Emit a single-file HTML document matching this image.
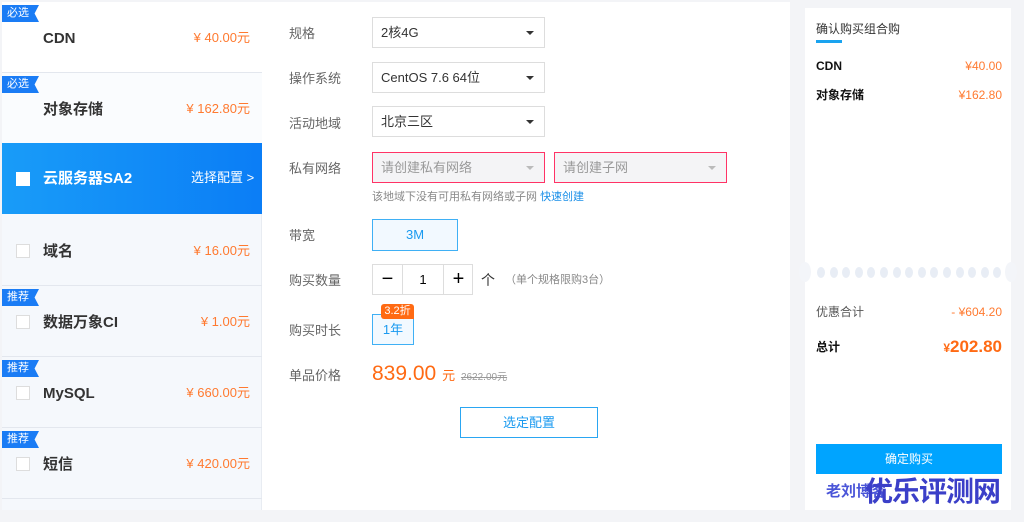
<!DOCTYPE html>
<html><head><meta charset="utf-8"><style>
*{margin:0;padding:0;box-sizing:border-box}
body{width:1024px;height:522px;background:#f3f4f7;font-family:"Liberation Sans","Noto Sans CJK SC",sans-serif;position:relative;overflow:hidden;line-height:1.15}
.a{position:absolute}
.left{left:2px;top:2px;width:260px;height:508px;background:#f5f8fc;border-right:1px solid #e8ecf2}
.item{position:absolute;left:0;width:260px;height:71px;border-bottom:1px solid #e3e7ee}
.tag{position:absolute;left:0;top:3px;width:37px;height:17px;background:#1a7cf5;color:#fff;font-size:11px;line-height:17px;padding-left:5px;clip-path:polygon(0 0,100% 0,88% 50%,100% 100%,0 100%)}
.name{position:absolute;left:41px;top:28px;font-size:15px;font-weight:bold;color:#333}
.price{position:absolute;right:12px;top:29px;font-size:13px;color:#ff7a30}
.cb{position:absolute;left:14px;top:29px;width:14px;height:14px;background:#fff;border:1px solid #ddd}
.mid{left:262px;top:2px;width:528px;height:508px;background:#fff}
.lbl{position:absolute;left:289px;font-size:13px;color:#666}
.sel{position:absolute;left:372px;width:173px;height:31px;border:1px solid #ddd;font-size:13px;color:#333;line-height:29px;padding-left:8px}
.sel:after{content:"";position:absolute;right:10px;top:13px;border:4px solid transparent;border-top:4px solid #333}
.err{background:#f4f4f6;border-color:#f36;color:#999}
.err:after{border-top-color:#bbb}
.right{left:805px;top:8px;width:206px;height:502px;background:#fff}
.dot{position:absolute;top:267px;width:8px;height:11px;border-radius:50%;background:#e8edf5}
</style></head><body>
<div class="a left">
 <div class="item" style="top:0;background:#fff"><div class="tag">必选</div><div class="name">CDN</div><div class="price">¥ 40.00元</div></div>
 <div class="item" style="top:71px;background:#fafcfe"><div class="tag">必选</div><div class="name">对象存储</div><div class="price">¥ 162.80元</div></div>
 <div class="item" style="top:213px"><div class="cb"></div><div class="name">域名</div><div class="price">¥ 16.00元</div></div>
 <div class="item" style="top:284px"><div class="tag">推荐</div><div class="cb"></div><div class="name">数据万象CI</div><div class="price">¥ 1.00元</div></div>
 <div class="item" style="top:355px"><div class="tag">推荐</div><div class="cb"></div><div class="name">MySQL</div><div class="price">¥ 660.00元</div></div>
 <div class="item" style="top:426px"><div class="tag">推荐</div><div class="cb"></div><div class="name">短信</div><div class="price">¥ 420.00元</div></div>
</div>
<div class="a" style="left:2px;top:143px;width:272px;height:71px;background:linear-gradient(90deg,#199cf8,#0a7cf6);clip-path:polygon(0 0,262px 0,100% 50%,262px 100%,0 100%)">
 <div class="a" style="left:14px;top:29px;width:14px;height:14px;background:#fff"></div>
 <div class="a" style="left:41px;top:27px;font-size:15px;font-weight:bold;color:#fff">云服务器SA2</div>
 <div class="a" style="left:189px;top:28px;font-size:13px;color:#fff">选择配置 &gt;</div>
</div>
<div class="a mid"></div>
<div class="lbl" style="top:27px">规格</div><div class="sel" style="top:17px">2核4G</div>
<div class="lbl" style="top:72px">操作系统</div><div class="sel" style="top:62px">CentOS 7.6 64位</div>
<div class="lbl" style="top:117px">活动地域</div><div class="sel" style="top:106px">北京三区</div>
<div class="lbl" style="top:162px">私有网络</div>
<div class="sel err" style="top:152px">请创建私有网络</div>
<div class="sel err" style="top:152px;left:554px">请创建子网</div>
<div class="a" style="left:372px;top:191px;font-size:11px;color:#888">该地域下没有可用私有网络或子网 <span style="color:#1a8fe8">快速创建</span></div>
<div class="lbl" style="top:229px">带宽</div>
<div class="a" style="left:372px;top:219px;width:86px;height:32px;border:1px solid #3fb0f5;background:#f2f9ff;color:#1a9af0;font-size:13px;text-align:center;line-height:30px">3M</div>
<div class="lbl" style="top:274px">购买数量</div>
<div class="a" style="left:372px;top:264px;width:101px;height:31px;border:1px solid #ddd;font-size:13px;line-height:29px">
 <span class="a" style="left:0;width:30px;height:29px;border-right:1px solid #ddd;text-align:center;font-size:20px">−</span>
 <span class="a" style="left:30px;width:40px;text-align:center">1</span>
 <span class="a" style="left:70px;width:30px;height:29px;border-left:1px solid #ddd;text-align:center;font-size:20px">+</span>
</div>
<div class="a" style="left:481px;top:272px;font-size:14px;color:#333">个</div>
<div class="a" style="left:505px;top:274px;font-size:11px;color:#888">（单个规格限购3台）</div>
<div class="lbl" style="top:324px">购买时长</div>
<div class="a" style="left:372px;top:314px;width:42px;height:31px;border:1px solid #3fb0f5;background:#f2f9ff;color:#1a9af0;font-size:13px;text-align:center;line-height:30px">1年</div>
<div class="a" style="left:381px;top:304px;width:33px;height:15px;background:#ff6a13;color:#fff;font-size:11px;text-align:center;line-height:15px;border-radius:3px 3px 0 3px">3.2折</div>
<div class="lbl" style="top:369px">单品价格</div>
<div class="a" style="left:372px;top:362px;font-size:21px;color:#ff6a13">839.00 <span style="font-size:13px">元</span> <span style="font-size:10px;color:#999;text-decoration:line-through">2622.00元</span></div>
<div class="a" style="left:460px;top:407px;width:138px;height:31px;border:1px solid #2aa6f2;color:#1a9af0;font-size:13px;text-align:center;line-height:29px">选定配置</div>
<div class="a right"></div>
<div class="a" style="left:816px;top:23px;font-size:12px;color:#333">确认购买组合购</div>
<div class="a" style="left:816px;top:40px;width:26px;height:3px;background:#1aa3ef"></div>
<div class="a" style="left:816px;top:60px;font-size:12px;font-weight:bold;color:#111">CDN</div>
<div class="a" style="right:22px;top:60px;font-size:12px;color:#ff7a30">¥40.00</div>
<div class="a" style="left:816px;top:89px;font-size:12px;font-weight:bold;color:#111">对象存储</div>
<div class="a" style="right:22px;top:89px;font-size:12px;color:#ff7a30">¥162.80</div>
<div class="dot" style="left:817px"></div><div class="dot" style="left:829.6px"></div><div class="dot" style="left:842.2px"></div><div class="dot" style="left:854.8px"></div><div class="dot" style="left:867.4px"></div><div class="dot" style="left:880px"></div><div class="dot" style="left:892.6px"></div><div class="dot" style="left:905.2px"></div><div class="dot" style="left:917.8px"></div><div class="dot" style="left:930.4px"></div><div class="dot" style="left:943px"></div><div class="dot" style="left:955.6px"></div><div class="dot" style="left:968.2px"></div><div class="dot" style="left:980.8px"></div><div class="dot" style="left:993.4px"></div>
<div class="a" style="left:799px;top:262px;width:12px;height:20px;border-radius:50%;background:#f3f5f9"></div>
<div class="a" style="left:1005px;top:262px;width:12px;height:20px;border-radius:50%;background:#f3f5f9"></div>
<div class="a" style="left:816px;top:306px;font-size:12px;color:#555">优惠合计</div>
<div class="a" style="right:22px;top:306px;font-size:12px;color:#ff7a30">- ¥604.20</div>
<div class="a" style="left:816px;top:341px;font-size:12px;font-weight:bold;color:#111">总计</div>
<div class="a" style="right:22px;top:337px;font-size:17px;font-weight:bold;color:#ff6a13"><span style="font-size:12px">¥</span>202.80</div>
<div class="a" style="left:816px;top:444px;width:186px;height:30px;background:#00a4ff;color:#fff;font-size:12px;text-align:center;line-height:30px">确定购买</div>
<div class="a" style="left:826px;top:483px;font-size:15px;font-weight:bold;color:#4a55d8">老刘博客</div>
<div class="a" style="left:865px;top:476px;font-size:28px;font-weight:bold;color:#3b3fc8;letter-spacing:-1px">优乐评测网</div>
</body></html>
